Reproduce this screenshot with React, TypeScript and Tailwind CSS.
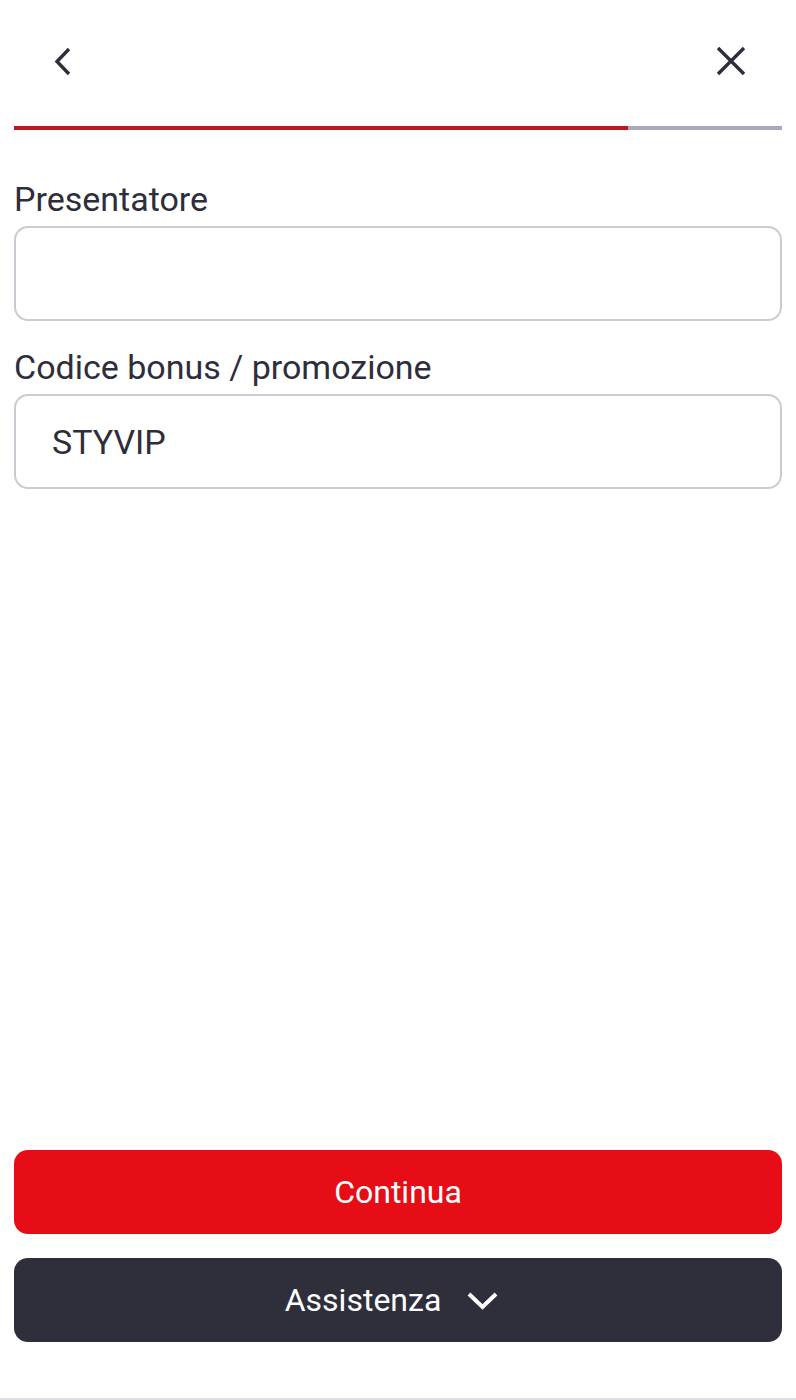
export default function App() {
  return (
    <div className="flex h-[1400px] w-[796px] flex-col bg-white font-['Roboto',sans-serif] text-[#2e2e3b]">
      {/* Header */}
      <div className="flex h-[124px] items-center justify-between px-[14px]">
        <button type="button" className="ml-[29px] -mt-[2px] flex h-[40px] w-[40px] items-center justify-center" aria-label="Indietro">
          <svg width="18" height="29" viewBox="0 0 18 29" fill="none">
            <path d="M15 2L3 14.5L15 27" stroke="#2e2e3b" strokeWidth="3.4" />
          </svg>
        </button>
        <button type="button" className="mr-[31px] -mt-[2px] flex h-[40px] w-[40px] items-center justify-center" aria-label="Chiudi">
          <svg width="30" height="30" viewBox="0 0 30 30" fill="none">
            <path d="M2 2L28 28M28 2L2 28" stroke="#2e2e3b" strokeWidth="3.4" />
          </svg>
        </button>
      </div>

      {/* Progress */}
      <div className="mx-[14px] mt-[2px] flex h-[4px]">
        <div className="h-full w-[614px] bg-[#c3151e]" />
        <div className="h-full flex-1 bg-[#a9a9b8]" />
      </div>

      {/* Form */}
      <div className="mt-[47px] flex flex-col px-[14px]">
        <label className="text-[34px] leading-[44px]">Presentatore</label>
        <input
          type="text"
          className="mt-[5px] h-[95px] w-full rounded-[14px] border-2 border-[#cbcbd3] px-[36px] text-[34px] outline-none"
        />
        <label className="mt-[24px] text-[34px] leading-[44px]">Codice bonus / promozione</label>
        <input
          type="text"
          defaultValue="STYVIP"
          className="mt-[5px] h-[95px] w-full rounded-[14px] border-2 border-[#cbcbd3] px-[36px] text-[34px] text-[#2e2e3b] outline-none"
        />
      </div>

      {/* Actions */}
      <div className="mt-auto flex flex-col gap-[24px] px-[14px] pb-[56px]">
        <button
          type="button"
          className="h-[84px] w-full rounded-[14px] bg-[#e60d17] text-[32px] text-white"
        >
          Continua
        </button>
        <button
          type="button"
          className="flex h-[84px] w-full items-center justify-center gap-[26px] rounded-[14px] bg-[#2f2f3c] pr-[13px] text-[32px] text-white"
        >
          Assistenza
          <svg width="31" height="18" viewBox="0 0 31 18" fill="none" className="mt-[2px]">
            <path d="M2 2L15.5 15L29 2" stroke="white" strokeWidth="4" />
          </svg>
        </button>
      </div>
      <div className="h-[2px] bg-[#dcdce2]" />
    </div>
  )
}
